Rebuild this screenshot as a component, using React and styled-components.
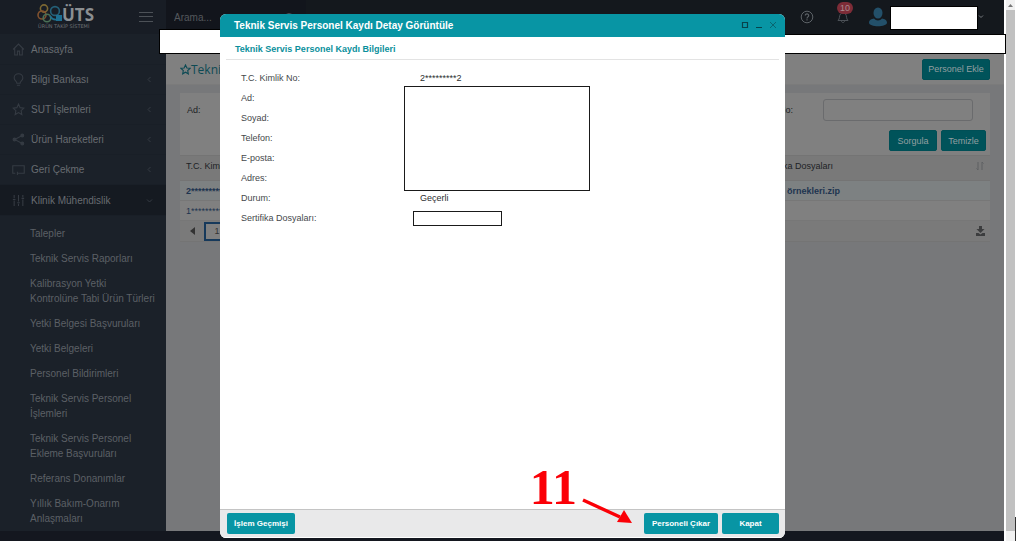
import React from "react";
import styled, { createGlobalStyle, css } from "styled-components";

const GlobalStyle = createGlobalStyle`
  * { box-sizing: border-box; }
  body {
    margin: 0;
    background: #fff;
    font-family: "Liberation Sans", Arial, sans-serif;
    font-size: 9px;
    color: #202225;
  }
  button, input { font-family: inherit; }
`;

const Viewport = styled.div`
  display: flex;
  min-height: 100vh;
  padding: 0 8px 1px 0;
  position: relative;
`;

const AppFrame = styled.div`
  flex: 1;
  display: flex;
  flex-direction: column;
  background: #14171f;
  min-width: 0;
  position: relative;
`;

const TopBar = styled.header`
  display: flex;
  align-items: center;
  height: 34px;
  background: #14181d;
`;

const Brand = styled.div`
  width: 166px;
  height: 34px;
  display: flex;
  align-items: center;
  justify-content: space-between;
  padding: 0 13px 0 36px;
  background: #181d25;
`;

const IconButton = styled.button`
  display: flex;
  position: relative;
  border: 0;
  padding: 0;
  background: none;
  color: ${(p) => p.$color || "#4c5157"};
`;

const Search = styled.label`
  display: flex;
  align-items: center;
  width: 140px;
  height: 34px;
  padding: 0 11px 0 8px;
  background: #12151c;
  color: #4a4e54;
`;

const SearchInput = styled.input`
  flex: 1;
  min-width: 0;
  border: 0;
  padding: 0;
  background: none;
  font-size: 10px;
  outline: none;
  &::placeholder { color: #54585d; opacity: 1; }
`;

const UserTools = styled.div`
  display: flex;
  align-items: center;
  margin-left: auto;
  padding-right: 20px;
`;

const HelpSlot = styled.div`margin-right: 22px;`;
const BellSlot = styled.div`margin-right: 18px;`;

const Badge = styled.span`
  position: absolute;
  left: 1px;
  top: -8px;
  width: 16px;
  height: 12px;
  border-radius: 6px;
  background: #7d2c37;
  color: #a8898d;
  font-size: 9px;
  line-height: 12px;
  text-align: center;
`;

const UserName = styled.div`
  width: 88px;
  height: 24px;
  margin: 2px 0 0 2px;
  background: #fff;
  border: 1px solid #000;
`;

const Body = styled.div`
  flex: 1;
  display: flex;
  margin-bottom: 10px;
`;

const Sidebar = styled.nav`
  width: 166px;
  flex: none;
  padding-top: 1px;
  background: #1b2129;
`;

const MenuLink = styled.a`
  display: flex;
  align-items: center;
  height: 30px;
  padding: 0 13px 0 12px;
  gap: 6px;
  font-size: 10px;
  color: #686c71;
  text-decoration: none;
  border-bottom: 1px solid #191f27;
  ${(p) => p.$active && css`background: #151a21; height: 31px;`}
  span { flex: 1; }
  svg { color: #353b43; flex: none; }
`;

const SubMenu = styled.ul`
  list-style: none;
  margin: 0;
  padding: 5px 10px 0 30px;
`;

const SubItem = styled.li`
  padding: 5px 0;
  line-height: 15px;
  font-size: 10px;
  a { color: #5b6066; text-decoration: none; }
`;

const Main = styled.main`
  flex: 1;
  min-width: 0;
  padding-top: 20px;
  background: #77787a;
`;

const PageHead = styled.div`
  display: flex;
  align-items: center;
  justify-content: space-between;
  height: 31px;
  padding: 0 14px;
  background: #808080;
  border-bottom: 1px solid #7b7b7b;
`;

const PageTitle = styled.h1`
  display: flex;
  align-items: center;
  margin: 0;
  font: 400 12px "Open Sans", sans-serif;
  color: #0d4a54;
`;

const PageButton = styled.button`
  height: 21px;
  padding: 0 5px;
  min-width: ${(p) => p.$min || 0}px;
  border: 1px solid #004f56;
  border-radius: 2px;
  background: #00535a;
  color: #939fa0;
  font-size: 9px;
  white-space: nowrap;
`;

const Panel = styled.section`
  margin: 8px 14px 0;
  background: #808080;
`;

const Filters = styled.form`
  display: flex;
  flex-direction: column;
  padding: 6px 4px 4px 7px;
  gap: 9px;
`;

const FilterRow = styled.div`
  display: flex;
  align-items: center;
  justify-content: space-between;
  padding-right: 13px;
`;

const FilterLabel = styled.label`
  display: flex;
  align-items: center;
  gap: ${(p) => p.$gap || 0}px;
`;

const FilterInput = styled.input`
  width: 150px;
  height: 22px;
  border: 1px solid #6a6b6d;
  border-radius: 3px;
  background: #808080;
`;

const Actions = styled.div`
  display: flex;
  justify-content: flex-end;
  gap: 4px;
`;

const Grid = styled.table`
  width: 100%;
  border-collapse: collapse;
  table-layout: fixed;
  th {
    height: 25px;
    padding: 0 6px 4px;
    background: #797979;
    border-top: 1px solid #747474;
    border-bottom: 1px solid #747474;
    text-align: left;
    font-weight: 400;
  }
  td {
    height: 20px;
    padding: 0 6px;
    border-bottom: 1px solid #777;
    color: #1d3450;
    white-space: nowrap;
  }
  tbody tr:first-child td { background: #7d8182; font-weight: 700; }
`;

const LastHead = styled.div`
  display: flex;
  align-items: center;
  justify-content: space-between;
  color: #202225;
  svg { color: #5f6163; }
`;

const Pager = styled.div`
  display: flex;
  align-items: center;
  height: 21px;
  padding: 0 4px 0 8px;
  background: #7a7a7a;
  border-bottom: 1px solid #747474;
`;

const PageNumber = styled.button`
  width: 26px;
  height: 19px;
  margin-left: 7px;
  border: 2px solid #16395b;
  background: #808080;
  padding: 0;
  color: #333;
  font-size: 9px;
`;

const Push = styled.div`margin-left: auto;`;

const ScrollTrack = styled.div`
  width: 11px;
  padding: 0 0 0 2px;
  background: #fff;
  display: flex;
  flex-direction: column;
`;
const ScrollArrow = styled.div`
  height: 10px;
  display: flex;
  align-items: center;
  justify-content: center;
  background: #f1f1f1;
`;
const ScrollThumb = styled.div`
  flex: 1;
  background: #c1c1c1;
`;

const Redaction = styled.div`
  position: absolute;
  background: #fff;
  border: 1px solid #000;
  ${(p) => p.$side === "left"
    ? css`left: 159px; width: 63px; top: 29px; height: 25px;`
    : css`right: -2px; width: 222px; top: 34px; height: 20px;`}
`;

const EdgeMark = styled.div`
  position: absolute;
  right: 7px;
  bottom: 1px;
  width: 1px;
  height: 24px;
  background: #333;
`;

const Dialog = styled.section`
  position: absolute;
  inset: 14px 219px 3px 220px;
  display: flex;
  flex-direction: column;
  background: #fff;
  border-radius: 6px;
  overflow: hidden;
`;

const DialogHead = styled.header`
  display: flex;
  align-items: center;
  justify-content: space-between;
  height: 23px;
  padding: 0 8px 0 14px;
  background: #0895a4;
  color: #fff;
`;

const DialogTitle = styled.h2`
  margin: 0;
  font-size: 10px;
  line-height: 23px;
`;

const WindowControls = styled.div`
  display: flex;
  gap: 5px;
  padding-bottom: 2px;
`;

const SectionTitle = styled.h3`
  margin: 0 6px;
  padding: 0 9px;
  height: 23px;
  line-height: 25px;
  font-size: 9px;
  color: #0b8f9c;
  border-bottom: 1px solid #e3e3e3;
`;

const Details = styled.dl`
  position: relative;
  flex: 1;
  margin: 0;
  padding: 8px 21px;
`;

const DetailRow = styled.div`
  display: flex;
  height: 20px;
  line-height: 20px;
  dt { width: 179px; color: #45484b; }
  dd { margin: 0; color: #2c2e30; }
`;

const BlankBox = styled.div`
  position: absolute;
  background: #fff;
  border: 1px solid #1a1a1a;
  ${(p) => p.$small
    ? css`left: 193px; top: 151px; width: 89px; height: 15px;`
    : css`left: 184px; top: 26px; width: 186px; height: 105px;`}
`;

const DialogFoot = styled.footer`
  display: flex;
  align-items: center;
  gap: 4px;
  height: 29px;
  padding: 0 6px 0 7px;
  background: #e9e9ea;
  border-top: 1px solid #c4c4c4;
  border-bottom: 1px solid #fff;
`;

const DialogButton = styled.button`
  height: 21px;
  min-width: ${(p) => p.$min}px;
  padding: 0 6px;
  border: 0;
  border-radius: 2px;
  background: #0895a4;
  color: #fff;
  font-size: 8px;
  font-weight: 700;
  white-space: nowrap;
`;

const Callout = styled.div`
  position: absolute;
  right: 370px;
  bottom: 14px;
  display: flex;
  color: #fb0007;
  pointer-events: none;
`;
const CalloutNumber = styled.span`
  font: 700 50px/55px "Liberation Serif", serif;
`;
const CalloutArrow = styled.svg`
  margin: 37px 0 0 3px;
`;

const Line = ({ size = 12, width = 1, children }) => (
  <svg width={size} height={size} viewBox="0 0 12 12" fill="none" stroke="currentColor" strokeWidth={width}>{children}</svg>
);

const Logo = () => (
  <svg width="60" height="28" viewBox="0 0 60 28" role="img" aria-label="ÜTS">
    <g fill="none" strokeWidth="1.6">
      <circle cx="8" cy="5.5" r="3.6" stroke="#7b6732" />
      <circle cx="6" cy="12" r="4" stroke="#80512e" />
      <circle cx="11" cy="15" r="3.8" stroke="#4a7056" />
      <circle cx="19" cy="8" r="4.4" stroke="#246078" />
      <path d="M14 13c3 5 8 4 11 2" stroke="#1f6f8e" />
    </g>
    <path d="M20 12h6v6h-6z" fill="#1d6f91" />
    <text x="26" y="18" fontSize="17" fontWeight="700" fontFamily="Open Sans, sans-serif" fill="#8b8f92">ÜTS</text>
    <text x="2" y="25" fontSize="5" fontFamily="DejaVu Sans, sans-serif" fill="#6d7175">ÜRÜN TAKİP SİSTEMİ</text>
  </svg>
);

const icons = {
  home: <path d="M1 6l5-5 5 5M2.5 5v6H5V7.500h2V11h2.500V5" />,
  idea: <path d="M4.500 9.500C4.500 7.500 2 7 2 4.500a4 3.800 0 018 0C10 7 7.500 7.500 7.500 9.500zM4.500 11.300h3" />,
  star: <path d="M6 1l1.500 3.300 3.500.4-2.600 2.400.7 3.600L6 8.900l-3.100 1.800.7-3.600L1 4.700l3.500-.4z" />,
  share: <g><path d="M9 2.500L2.500 6 9 9.500" /><circle cx="9.500" cy="2.300" r="1.300" fill="currentColor" /><circle cx="2.300" cy="6" r="1.300" fill="currentColor" /><circle cx="9.500" cy="9.700" r="1.300" fill="currentColor" /></g>,
  recall: <path d="M3 9.500H.7v-7h10.600v7H5M5 8v3" />,
  sliders: <path d="M2 1v3M2 6v5M.8 5h2.400M6 1v6M6 9v2M4.800 8h2.400M10 1v2M10 5v6M8.800 4h2.400" />,
};

const menu = [
  ["home", "Anasayfa"],
  ["idea", "Bilgi Bankası", true],
  ["star", "SUT İşlemleri", true],
  ["share", "Ürün Hareketleri", true],
  ["recall", "Geri Çekme", true],
  ["sliders", "Klinik Mühendislik", true, true],
];

const subMenu = [
  ["Talepler"],
  ["Teknik Servis Raporları"],
  ["Kalibrasyon Yetki", "Kontrolüne Tabi Ürün Türleri"],
  ["Yetki Belgesi Başvuruları"],
  ["Yetki Belgeleri"],
  ["Personel Bildirimleri"],
  ["Teknik Servis Personel", "İşlemleri"],
  ["Teknik Servis Personel", "Ekleme Başvuruları"],
  ["Referans Donanımlar"],
  ["Yıllık Bakım-Onarım", "Anlaşmaları"],
];

const details = [
  ["T.C. Kimlik No:", "2*********2"],
  ["Ad:"],
  ["Soyad:"],
  ["Telefon:"],
  ["E-posta:"],
  ["Adres:"],
  ["Durum:", "Geçerli"],
  ["Sertifika Dosyaları:"],
];

export default function App() {
  return (
    <Viewport>
      <GlobalStyle />
      <AppFrame>
        <TopBar>
          <Brand>
            <Logo />
            <IconButton aria-label="Menü">
              <svg width="14" height="12" stroke="currentColor"><path d="M0 1.500h14M0 5.500h14M0 10.500h14" /></svg>
            </IconButton>
          </Brand>
          <Search>
            <SearchInput placeholder="Arama..." aria-label="Arama" />
            <Line size={11}><circle cx="5.500" cy="5.500" r="4" /><path d="M8.500 8.500L11 11" /></Line>
          </Search>
          <UserTools>
            <HelpSlot>
              <IconButton aria-label="Yardım" $color="#5d6267">
                <svg width="14" height="14" viewBox="0 0 14 14" fill="none" stroke="currentColor">
                  <circle cx="7" cy="7" r="5.800" />
                  <path d="M5.300 5.600c0-2.300 3.500-2.200 3.400 0C8.700 7 7 6.800 7 8.400M7 9.300v1.200" strokeWidth="1.200" />
                </svg>
              </IconButton>
            </HelpSlot>
            <BellSlot>
              <IconButton aria-label="Bildirimler">
                <svg width="14" height="14" viewBox="0 0 14 14" fill="none" stroke="currentColor">
                  <path d="M2 10.500c2-1.500 1-5 2.500-6.500 1.500-1.300 3.500-1.300 5 0C11 5.500 10 9 12 10.500zM5.500 11c0 2 3 2 3 0" />
                </svg>
                <Badge>10</Badge>
              </IconButton>
            </BellSlot>
            <svg width="20" height="20" viewBox="0 0 20 20" fill="#23506a">
              <ellipse cx="10" cy="6" rx="4.500" ry="5.500" />
              <path d="M1 15.500c0-2.500 2.500-3.500 5-4 2 2.500 6 2.500 8 0 2.500.5 5 1.500 5 4 0 5-18 5-18 0z" />
            </svg>
            <UserName />
            <IconButton aria-label="Kullanıcı menüsü" $color="#777b80">
              <svg width="6" height="6" fill="none" stroke="currentColor"><path d="M1 1.500l2 2 2-2" /></svg>
            </IconButton>
          </UserTools>
        </TopBar>
        <Body>
          <Sidebar>
            {menu.map(([icon, label, more, active]) => (
              <MenuLink key={label} href="#" $active={active}>
                <Line size={13}>{icons[icon]}</Line>
                <span>{label}</span>
                {more && (
                  <svg width="7" height="7" fill="none" stroke="currentColor">
                    <path d={active ? "M1 2.500l2.500 2.500L6 2.500" : "M4.500 1L2 3.500 4.500 6"} />
                  </svg>
                )}
              </MenuLink>
            ))}
            <SubMenu>
              {subMenu.map((lines) => (
                <SubItem key={lines.join(" ")}>
                  <a href="#">{lines[0]}{lines[1] && <><br />{lines[1]}</>}</a>
                </SubItem>
              ))}
            </SubMenu>
          </Sidebar>
          <Main>
            <PageHead>
              <PageTitle><Line size={11} width={1.2}>{icons.star}</Line>Teknik</PageTitle>
              <PageButton $min={68}>Personel Ekle</PageButton>
            </PageHead>
            <Panel>
              <Filters>
                <FilterRow>
                  <FilterLabel as="span">Ad:</FilterLabel>
                  <FilterLabel $gap={30}>T.C. Kimlik No:<FilterInput /></FilterLabel>
                </FilterRow>
                <Actions>
                  <PageButton type="button" $min={48}>Sorgula</PageButton>
                  <PageButton type="button" $min={45}>Temizle</PageButton>
                </Actions>
              </Filters>
              <Grid>
                <colgroup><col /><col width="236" /></colgroup>
                <thead>
                  <tr>
                    <th>T.C. Kimlik No</th>
                    <th>
                      <LastHead>
                        Sertifika Dosyaları
                        <svg width="8" height="8" fill="none" stroke="currentColor"><path d="M2 0v8M6 0v8M0.500 6.500L2 8M6 0l1.500 1.500" /></svg>
                      </LastHead>
                    </th>
                  </tr>
                </thead>
                <tbody>
                  <tr><td>2*********2</td><td>Belge örnekleri.zip</td></tr>
                  <tr><td>1*********1</td><td /></tr>
                </tbody>
              </Grid>
              <Pager>
                <IconButton aria-label="Önceki" $color="#333">
                  <svg width="9" height="8" fill="currentColor"><path d="M7 0v8L2 4z" /></svg>
                </IconButton>
                <PageNumber>1</PageNumber>
                <Push>
                  <IconButton aria-label="İndir" $color="#3c3d3e">
                    <svg width="11" height="10" fill="currentColor"><path d="M4 0h3v3h2.500L5.500 7 1.500 3H4zM1 7h2.500l2 1.500 2-1.500H10v3H1z" /></svg>
                  </IconButton>
                </Push>
              </Pager>
            </Panel>
          </Main>
        </Body>
        <Redaction $side="left" />
        <Redaction $side="right" />
        <Dialog role="dialog" aria-label="Teknik Servis Personel Kaydı Detay Görüntüle">
          <DialogHead>
            <DialogTitle>Teknik Servis Personel Kaydı Detay Görüntüle</DialogTitle>
            <WindowControls>
              <IconButton aria-label="Büyüt" $color="#07434b">
                <svg width="9" height="8" fill="none" stroke="currentColor" strokeWidth="1.200"><path d="M1.500 1.500h5v5h-5z" /></svg>
              </IconButton>
              <IconButton aria-label="Küçült" $color="#07434b">
                <svg width="9" height="8" stroke="currentColor"><path d="M1 6.500h6" /></svg>
              </IconButton>
              <IconButton aria-label="Pencereyi kapat" $color="#0a6670">
                <svg width="8" height="8" stroke="currentColor"><path d="M1 1l6 6M7 1L1 7" /></svg>
              </IconButton>
            </WindowControls>
          </DialogHead>
          <SectionTitle>Teknik Servis Personel Kaydı Bilgileri</SectionTitle>
          <Details>
            {details.map(([label, value]) => (
              <DetailRow key={label}><dt>{label}</dt><dd>{value}</dd></DetailRow>
            ))}
            <BlankBox />
            <BlankBox $small />
          </Details>
          <DialogFoot>
            <DialogButton $min={68}>İşlem Geçmişi</DialogButton>
            <Push />
            <DialogButton $min={74}>Personeli Çıkar</DialogButton>
            <DialogButton $min={57}>Kapat</DialogButton>
          </DialogFoot>
        </Dialog>
        <Callout>
          <CalloutNumber>11</CalloutNumber>
          <CalloutArrow width="54" height="30" viewBox="0 0 54 30">
            <path d="M3 3L40 20" stroke="currentColor" strokeWidth="3.400" />
            <path d="M44 13l8 13-15-1z" fill="currentColor" />
          </CalloutArrow>
        </Callout>
      </AppFrame>
      <ScrollTrack>
        <ScrollArrow><svg width="5" height="3" fill="#777"><path d="M0 3l2.500-3L5 3z" /></svg></ScrollArrow>
        <ScrollThumb />
        <ScrollArrow />
      </ScrollTrack>
      <EdgeMark />
    </Viewport>
  );
}
